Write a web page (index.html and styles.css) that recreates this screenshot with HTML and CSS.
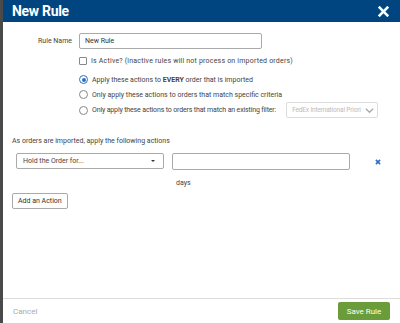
FILE: index.html
```html
<!DOCTYPE html>
<html lang="en">
<head>
    <meta charset="UTF-8" />
    <title>New Rule</title>
    <link rel="stylesheet" href="styles.css">
</head>
<body>
    <div class="modal">
        <div class="modal-header">
            <h1>New Rule</h1>
            <svg class="close" width="11" height="11" viewBox="0 0 10 10" stroke="#fff" stroke-width="2.4" stroke-linecap="square">
                <line x1="1.5" y1="1.5" x2="8.5" y2="8.5"></line>
                <line x1="8.5" y1="1.5" x2="1.5" y2="8.5"></line>
            </svg>
        </div>

        <div class="modal-body">
            <div class="form-row">
                <label class="row-label">Rule Name</label>
                <input class="text-input name-input" type="text" value="New Rule">
            </div>

            <div class="options">
                <label class="option check-option">
                    <span class="checkbox"></span>
                    <span class="wide">Is Active? (inactive rules will not process on imported orders)</span>
                </label>
                <label class="option">
                    <span class="radio checked"></span>
                    <span>Apply these actions to <strong>EVERY</strong> order that is imported</span>
                </label>
                <label class="option">
                    <span class="radio"></span>
                    <span>Only apply these actions to orders that match specific criteria</span>
                </label>
                <div class="option filter-option">
                    <span class="radio"></span>
                    <span class="narrow">Only apply these actions to orders that match an existing filter:</span>
                    <div class="filter-select">
                        <span class="filter-text">FedEx International Priori</span>
                        <svg width="9" height="7" viewBox="0 0 10 7" fill="none" stroke="#aaa" stroke-width="1.6">
                            <polyline points="1 1.5 5 5.5 9 1.5"></polyline>
                        </svg>
                    </div>
                </div>
            </div>

            <p class="section-title">As orders are imported, apply the following actions</p>

            <div class="action-row">
                <div class="action-select">
                    <span>Hold the Order for...</span>
                    <span class="caret"></span>
                </div>
                <div class="action-value">
                    <input class="text-input days-input" type="text">
                    <span class="days">days</span>
                </div>
                <svg class="remove" width="6" height="6" viewBox="0 0 10 10" stroke="#2d6fc0" stroke-width="2.6">
                    <line x1="1.5" y1="1.5" x2="8.5" y2="8.5"></line>
                    <line x1="8.5" y1="1.5" x2="1.5" y2="8.5"></line>
                </svg>
            </div>

            <button class="add-button">Add an Action</button>
        </div>

        <div class="modal-footer">
            <span class="cancel">Cancel</span>
            <button class="save-button">Save Rule</button>
        </div>
    </div>
</body>
</html>
```

FILE: styles.css
```css
html, body {
    margin: 0;
    padding: 0;
    height: 100%;
}

body {
    font-family: Roboto, 'Liberation Sans', sans-serif;
    font-size: 7px;
    color: #444;
    background: #fff;
}

.modal {
    height: 323px;
    display: flex;
    flex-direction: column;
    border-left: 3px solid #4a4a4a;
    box-sizing: border-box;
}

.modal-header {
    height: 22px;
    flex-shrink: 0;
    background: #00457f;
    color: #fff;
    display: flex;
    align-items: center;
    justify-content: space-between;
    padding: 0 11px 0 9px;
}

.modal-header h1 {
    margin: 0;
    font-size: 14px;
    font-weight: 700;
    letter-spacing: -0.3px;
}

.modal-body {
    flex-grow: 1;
    padding: 11px 13px 0 9px;
}

.form-row {
    display: flex;
    align-items: center;
}

.row-label {
    width: 60px;
    text-align: right;
    margin-right: 7px;
}

.text-input {
    font-family: inherit;
    font-size: 7px;
    color: #333;
    border: 1px solid #aaa;
    border-radius: 2px;
    box-sizing: border-box;
    padding: 0 5px;
    outline: none;
}

.name-input {
    width: 183px;
    height: 16px;
}

.options {
    margin-left: 67px;
    margin-top: 4px;
    display: flex;
    flex-direction: column;
}

.option {
    display: flex;
    align-items: center;
    gap: 4px;
    height: 15px;
    white-space: nowrap;
}

.check-option {
    margin-bottom: 4px;
}

.wide {
    letter-spacing: 0.2px;
}

.narrow {
    letter-spacing: -0.15px;
}

.checkbox {
    width: 6px;
    height: 6px;
    border: 1px solid #888;
    border-radius: 1px;
}

.radio {
    width: 7px;
    height: 7px;
    flex-shrink: 0;
    border: 1px solid #888;
    border-radius: 50%;
    position: relative;
}

.radio.checked {
    border-color: #2d6fc0;
}

.radio.checked::after {
    content: "";
    position: absolute;
    left: 1.5px;
    top: 1.5px;
    width: 4px;
    height: 4px;
    border-radius: 50%;
    background: #2d6fc0;
}

.filter-option {
    height: 16px;
}

.filter-select {
    margin-left: 6px;
    width: 92px;
    height: 16px;
    flex-shrink: 0;
    box-sizing: border-box;
    border: 1px solid #ddd;
    border-radius: 2px;
    display: flex;
    align-items: center;
    justify-content: space-between;
    padding: 0 3px 0 5px;
    color: #bbb;
}

.filter-text {
    font-size: 6.5px;
    letter-spacing: -0.15px;
}

.filter-select svg {
    flex-shrink: 0;
}

.section-title {
    margin: 19px 0 0;
}

.action-row {
    display: flex;
    align-items: flex-start;
    margin-top: 8px;
    padding-left: 4px;
}

.action-select {
    width: 148px;
    height: 16px;
    box-sizing: border-box;
    border: 1px solid #aaa;
    border-radius: 2px;
    display: flex;
    align-items: center;
    justify-content: space-between;
    padding: 0 8px 0 6px;
}

.caret {
    width: 0;
    height: 0;
    border-left: 2px solid transparent;
    border-right: 2px solid transparent;
    border-top: 2px solid #333;
}

.action-value {
    margin-left: 8px;
    display: flex;
    flex-direction: column;
}

.days-input {
    width: 178px;
    height: 17px;
}

.days {
    margin-top: 9px;
    margin-left: 4px;
}

.remove {
    margin-left: 25px;
    margin-top: 6px;
}

.add-button {
    margin-top: 6px;
    font-family: inherit;
    font-size: 7px;
    color: #333;
    background: #fff;
    border: 1px solid #aaa;
    border-radius: 2px;
    height: 16px;
    padding: 0 5px;
}

.modal-footer {
    border-top: 1px solid #ddd;
    height: 24px;
    flex-shrink: 0;
    display: flex;
    align-items: center;
    justify-content: space-between;
    padding: 0 10px 0 10px;
}

.cancel {
    color: #aaa;
    font-size: 8px;
}

.save-button {
    font-family: inherit;
    font-size: 8px;
    color: #fff;
    background: #6a9c3a;
    border: none;
    border-radius: 2px;
    width: 52px;
    height: 18px;
}
```
